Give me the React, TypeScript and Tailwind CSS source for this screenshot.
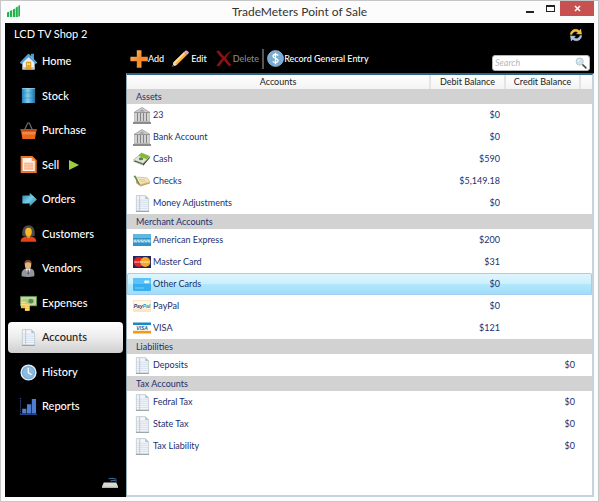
import type { ReactNode } from 'react'
import clsx from 'clsx'

type IconProps = { className?: string }

function LogoIcon() {
  return (
    <svg className="h-3 w-3.5" viewBox="0 0 14 12" aria-hidden="true">
      <path d="M0 7.500l2.200-1v5.500H0zM3 6l2.200-1v7H3zM6 4.500l2.200-1V12H6zM8.800 2.500l2-1V12h-2zM11.300 1L13 0v11.500h-1.700z" fill="#22b24c" />
    </svg>
  )
}

function RefreshIcon() {
  return (
    <svg className="h-3.5 w-3.5" viewBox="0 0 14 14" aria-hidden="true">
      <path d="M1.200 6.500C1.500 3.200 3.900 1.200 6.600 1.200c1.500 0 2.700.5 3.600 1.400L11.800 1l.9 5.200-5.200-.4 1.400-1.500C7.200 2.900 4 3.300 3 6.600z" fill="#f5bd3c" stroke="#fbdc78" strokeWidth=".3" />
      <path d="M12.800 7.500c-.3 3.300-2.700 5.300-5.400 5.300-1.500 0-2.700-.5-3.600-1.400L2.200 13l-.9-5.200 5.200.4-1.400 1.500c1.700 1.400 4.900 1 5.900-2.300z" fill="#a9c0dc" stroke="#dce8f5" strokeWidth=".3" />
    </svg>
  )
}

function HomeIcon({ className }: IconProps) {
  return (
    <svg className={className} viewBox="0 0 18 18" aria-hidden="true">
      <path d="M11.500.8h3.300v6h-3.300z" fill="#4c96d2" />
      <path d="M2.500 9L9 3l6.500 6v8.500h-13z" fill="#edf0f3" />
      <path d="M2.500 15h13v2.500h-13z" fill="#bcc4ca" />
      <path d="M0 10.300L9 1l9 9.300-1.900.9L9 4.600l-7.100 6.600z" fill="#4b9cdb" stroke="#a5d7f7" strokeWidth=".6" />
      <path d="M6.700 9.500h4.800v7.700H6.700z" fill="#f1a91c" stroke="#c77c14" strokeWidth=".5" />
      <path d="M7.700 10.800h1.200v2H7.700zM9.400 10.800h1.200v2H9.400z" fill="#fff0a0" />
    </svg>
  )
}

function StockIcon({ className }: IconProps) {
  return (
    <svg className={className} viewBox="0 0 18 18" aria-hidden="true">
      <defs>
        <linearGradient id="barrel">
          <stop offset="0" stopColor="#2482b8" />
          <stop offset=".45" stopColor="#7fd0f2" />
          <stop offset="1" stopColor="#1c6ca2" />
        </linearGradient>
      </defs>
      <path d="M2 1.200h14v15.800H2z" fill="url(#barrel)" />
      <path d="M2 6.200h14M2 11.700h14" fill="none" stroke="#2b7ba6" strokeWidth=".7" opacity=".6" />
      <path d="M2 1.600h14" fill="none" stroke="#b8ebff" strokeWidth=".6" />
    </svg>
  )
}

function PurchaseIcon({ className }: IconProps) {
  return (
    <svg className={className} viewBox="0 0 18 18" aria-hidden="true">
      <path d="M4.500 9l3.700-8h1.600l3.700 8" fill="none" stroke="#77716c" strokeWidth="1.200" />
      <path d="M1 8.300h16.500L15.800 18H2.500z" fill="#e9661d" />
      <path d="M.3 7.500h17.600l-.5 2.200H.8z" fill="#b94c16" />
      <path d="M2 10.500h14.300l-.5 2.800H2.400z" fill="#f58645" />
    </svg>
  )
}

function SellIcon({ className }: IconProps) {
  return (
    <svg className={className} viewBox="0 0 18 18" aria-hidden="true">
      <path d="M1.700 1h11l4 3.800v12.200h-15z" fill="#fff2e8" stroke="#f27324" strokeWidth="2" />
      <path d="M12.300 1.400v4h4z" fill="#f79a5c" />
      <path d="M4.500 7h9.500v7.500H4.500z" fill="#f9b68b" />
      <path d="M4.500 9.300H14M4.500 12H14M7.500 7v7.500M10.700 7v7.500" stroke="#fbdac4" strokeWidth=".6" />
    </svg>
  )
}

function OrdersIcon({ className }: IconProps) {
  return (
    <svg className={className} viewBox="0 0 18 18" aria-hidden="true">
      <defs>
        <linearGradient id="arrow" x2="1" y2="1">
          <stop offset="0" stopColor="#1f7da6" />
          <stop offset=".5" stopColor="#78cfe8" />
          <stop offset="1" stopColor="#1c7197" />
        </linearGradient>
      </defs>
      <path d="M2.500 4.800h7.800V1.800L18 9l-7.700 7.200v-3H2.500z" fill="url(#arrow)" />
    </svg>
  )
}

function CustomersIcon({ className }: IconProps) {
  return (
    <svg className={className} viewBox="0 0 18 18" aria-hidden="true">
      <path d="M2.500 11.500C1.500 4.500 4.500.3 9 .3s7.500 4.200 6.500 11.200l-3 1h-7z" fill="#4d4a48" />
      <path d="M7 9.500h4v5H7z" fill="#e09a20" />
      <ellipse cx="9" cy="7.300" rx="3.500" ry="4.400" fill="#fbb929" />
      <path d="M.8 17.700c0-3.700 2.200-4.900 5.500-5.200q2.700 2.600 5.400 0c3.300.3 5.500 1.500 5.500 5.200z" fill="#e8421b" />
    </svg>
  )
}

function VendorsIcon({ className }: IconProps) {
  return (
    <svg className={className} viewBox="0 0 18 18" aria-hidden="true">
      <path d="M1.800 17.300C1 12 3.300 9.500 6.800 9h4c3.600.5 5.100 3 4.200 8.300q-6.500 1.400-13.200 0z" fill="#93979b" />
      <path d="M5.800 9h5.400l-2.400 6z" fill="#fff" />
      <path d="M8 10h1.200l.5 4.500-1 1.200-1-1.200z" fill="#59626b" />
      <ellipse cx="8.500" cy="5" rx="3.400" ry="4.600" fill="#e5b484" />
      <path d="M4.800 5C4.100 1.300 6.100 0 8.700 0s4.300 1.500 3.500 5.200c-.5-2-1.500-2.700-3.400-2.800S5.600 3 4.800 5z" fill="#7a4c28" />
    </svg>
  )
}

function ExpensesIcon({ className }: IconProps) {
  return (
    <svg className={className} viewBox="0 0 18 18" aria-hidden="true">
      <path d="M.4 1.500h17.200v10H.4z" fill="#a9cc8b" stroke="#6a9657" strokeWidth=".7" />
      <path d="M2 3.200h14v6.500H2z" fill="none" stroke="#dceccb" strokeWidth=".8" />
      <ellipse cx="11.500" cy="6.500" rx="2.600" ry="2.600" fill="#5b8a4c" />
      <path d="M1 6h5v8H1zM5.200 8.500h5v8.500h-5z" fill="#f0c24a" />
      <path d="M1 8h5M1 10.200h5M5.200 10.700h5M5.200 12.900h5M5.200 15.100h5" stroke="#fff0ad" strokeWidth=".8" />
    </svg>
  )
}

function NoteIcon({ className }: IconProps) {
  return (
    <svg className={className} viewBox="0 0 18 18" aria-hidden="true">
      <path d="M2.500.6H12l3.500 3.600v13h-13z" fill="#f1f5fb" stroke="#b4c4c6" strokeWidth=".8" />
      <path d="M3.500 5.500H15M3.500 7.700H15M3.500 9.900H15M3.500 12.100H15M3.500 14.300H15" stroke="#cddaec" strokeWidth=".8" />
      <path d="M6 1v15.800" stroke="#eab0b0" strokeWidth=".9" />
      <path d="M12 .6l3.500 3.600H12z" fill="#a9c4c0" />
      <path d="M2.100 17.300h13.700" stroke="#87989b" />
    </svg>
  )
}

function HistoryIcon({ className }: IconProps) {
  return (
    <svg className={className} viewBox="0 0 18 18" aria-hidden="true">
      <circle cx="9" cy="9" r="7.800" fill="#6ba6d4" stroke="#e3e9ee" strokeWidth="1.600" />
      <circle cx="9" cy="9" r="6" fill="#88bce3" />
      <path d="M8.800 4v5.200l3.400 2.300" fill="none" stroke="#fff" strokeWidth="1.300" />
    </svg>
  )
}

function ReportsIcon({ className }: IconProps) {
  return (
    <svg className={className} viewBox="0 0 18 18" aria-hidden="true">
      <path d="M.6 0v17" stroke="#3f62ae" strokeDasharray="1 1" />
      <path d="M0 17.300h18" stroke="#2a4a8c" strokeWidth="1.200" />
      <path d="M2.300 11.500h4.500v4.800H2.300zM7.400 6.500h4.500v9.800H7.400zM12.500 1h4.500v15.300h-4.500z" fill="#4f7bd0" />
    </svg>
  )
}

function PlusIcon({ className }: IconProps) {
  return (
    <svg className={className} viewBox="0 0 18 18" aria-hidden="true">
      <defs>
        <linearGradient id="plus" x2="1" y2="1">
          <stop offset="0" stopColor="#ffc27a" />
          <stop offset=".5" stopColor="#f5862a" />
          <stop offset="1" stopColor="#f9a23c" />
        </linearGradient>
      </defs>
      <path d="M6.800.3h4.700v6.400h6.300v4.600h-6.300v6.500H6.800v-6.500H.4V6.700h6.400z" fill="url(#plus)" />
    </svg>
  )
}

function PencilIcon({ className }: IconProps) {
  return (
    <svg className={className} viewBox="0 0 18 18" aria-hidden="true">
      <path d="M.5 17.500l1.200-4.500L12.800 2l3.200 3L5 16z" fill="#f7b23f" />
      <path d="M1.700 13L12.800 2l1.300 1.200L3.200 14.500z" fill="#ffe09a" />
      <path d="M12.800 2L14 .8q1.500-.7 2.900.6t.5 2.300L16 5z" fill="#d9a6d5" />
      <path d="M.5 17.500L1.700 13 5 16z" fill="#f3dec0" />
      <path d="M.5 17.500l.6-2 1.500 1.400z" fill="#333" />
    </svg>
  )
}

function CrossIcon({ className }: IconProps) {
  return (
    <svg className={className} viewBox="0 0 18 18" aria-hidden="true">
      <path d="M.8 1.500l3-.9q2.700 4 5.400 6.200Q12.800 2.300 17.500.5 13.200 4.500 11 8.500q2.500 3.800 6 7.500l-2.500 1.500Q11.200 13.700 8.900 10.900 6 14.700 3.700 17.600L1 16.500Q4 12.500 7 8.800 3.500 5.500.8 1.500z" fill="#8a1210" />
    </svg>
  )
}

function DollarIcon({ className }: IconProps) {
  return (
    <svg className={className} viewBox="0 0 18 18" aria-hidden="true">
      <circle cx="9" cy="9" r="8.400" fill="#78acd2" stroke="#a3c8e2" strokeWidth=".8" />
      <path d="M12 5.800C9.500 3.900 6.200 4.700 6.300 6.700c.1 2.300 5.500 1.900 5.500 4.400 0 2.200-3.500 2.800-5.800 1M9 3v12" fill="none" stroke="#fff" strokeWidth="1.400" />
    </svg>
  )
}

function SearchIcon() {
  return (
    <svg className="h-3 w-3 shrink-0" viewBox="0 0 12 12" aria-hidden="true">
      <path d="M7.500 7.500l3.400 3.300" stroke="#4a4a4a" strokeWidth="1.700" strokeLinecap="round" />
      <circle cx="4.700" cy="4.500" r="3.600" fill="#cbe4f4" stroke="#b8c6d0" strokeWidth="1" />
      <path d="M2.800 4.500q.3-1.600 1.900-1.700" stroke="#fff" fill="none" />
    </svg>
  )
}

function RegisterIcon() {
  return (
    <svg className="h-3 w-4" viewBox="0 0 16 12" aria-hidden="true">
      <path d="M1.800 5.500h12.500L16 9.500V11H0V9.500z" fill="#d9dad2" />
      <path d="M0 9.700h16V11H0z" fill="#b4b5ae" />
      <path d="M6.500 1.800l4-.6 4 1M8.500 3.900l3.500-.7 3 1" fill="none" stroke="#3c658b" strokeWidth="1.100" />
    </svg>
  )
}

function BankIcon() {
  return (
    <svg className="h-[17px] w-[18px]" viewBox="0 0 18 17" aria-hidden="true">
      <path d="M1 5.500L9 .5l8 5z" fill="#cfcfcf" stroke="#8f8f8f" strokeWidth=".7" />
      <path d="M6 4.500l3-2 3 2z" fill="#9b9b9b" />
      <path d="M1.500 5.500h15v9h-15z" fill="#858585" />
      <path d="M2 6h2v8H2zM5 6h2v8H5zM8 6h2v8H8zM11 6h2v8h-2zM14 6h2v8h-2z" fill="#d2d2d2" />
      <path d="M1 14h16v1.200H1z" fill="#b7b7b7" />
      <path d="M0 15h18v2H0z" fill="#8c8c8c" />
    </svg>
  )
}

function CashIcon() {
  return (
    <svg className="h-3.5 w-[18px]" viewBox="0 0 18 14" aria-hidden="true">
      <path d="M.5 9.500L8.500 2l8.700 3.500L10.500 13.500z" fill="#38432f" />
      <path d="M.5 8l8-7L17 4.500l-6.800 7z" fill="#e1e8d9" stroke="#8b977d" strokeWidth=".6" />
      <path d="M5.500 3.700L8.500 1l8 3.300-2.800 2.900z" fill="#84b932" />
      <ellipse cx="8" cy="6.800" rx="2.300" ry="1.500" fill="#65804f" />
      <path d="M1 9.800l9 2.900" stroke="#f0f2ed" strokeWidth=".6" />
    </svg>
  )
}

function ChecksIcon() {
  return (
    <svg className="h-3.5 w-[18px]" viewBox="0 0 18 14" aria-hidden="true">
      <path d="M3 6l12.500-.5 1.500 4L7.500 12.500 3 9z" fill="#c9a869" />
      <path d="M2.200 3l12 .8L17 8 6.800 10.800z" fill="#f3e5ba" stroke="#cdb27a" strokeWidth=".6" />
      <path d="M6 5.500l6 .3M7.300 7.500l6-.3" stroke="#cdbb8c" strokeWidth=".6" />
      <path d="M.5 2l1.800-.5L6.800 10l-.5 1z" fill="#5a8b50" />
    </svg>
  )
}

const cardText = {
  fontFamily: 'Liberation Sans',
  fontWeight: 700,
  textAnchor: 'middle' as const,
}

function AmexIcon() {
  return (
    <svg className="h-3 w-[18px]" viewBox="0 0 18 12" aria-hidden="true">
      <path d="M0 0h18v12H0z" fill="#3094c8" />
      <path d="M0 0h18v4H0z" fill="#60b8e0" />
      <path d="M0 5.500h18v3H0z" fill="#6db8dd" />
      <path d="M1 6.200h2M4 6.200h2M7 6.200h2.500M10.500 6.200h2M13.500 6.200H17M1 7.800h3M5 7.800h2M8 7.800h3M12 7.800h2M15 7.800h2" stroke="#fff" strokeWidth=".7" />
    </svg>
  )
}

function MasterCardIcon() {
  return (
    <svg className="h-3 w-[18px]" viewBox="0 0 18 12" aria-hidden="true">
      <path d="M0 0h18v12H0z" fill="#21275e" />
      <circle cx="5.700" cy="6" r="5" fill="#e02420" />
      <circle cx="12.300" cy="6" r="5" fill="#f6a723" />
      <path d="M1.500 6h15" stroke="#fff" strokeWidth="1.600" strokeDasharray="1.300 .5" opacity=".7" />
    </svg>
  )
}

function OtherCardIcon() {
  return (
    <svg className="h-[13px] w-[18px]" viewBox="0 0 18 13" aria-hidden="true">
      <rect width="18" height="13" rx="1.200" fill="#38aef0" />
      <path d="M1 0h16l1 1v5H0V1z" fill="#5cc3f8" />
      <circle cx="12.700" cy="3.800" r="1.500" fill="#fff" />
      <circle cx="15" cy="3.800" r="1.500" fill="#d8f2ff" />
      <path d="M2 10h9" stroke="#8fdcff" strokeWidth=".7" />
    </svg>
  )
}

function PayPalIcon() {
  return (
    <svg className="h-3 w-[18px]" viewBox="0 0 18 12" aria-hidden="true">
      <path d="M.4.4h17.200v11.200H.4z" fill="#fff7e9" stroke="#f9dcb3" strokeWidth=".8" />
      <path d="M1 8.500h16V11H1z" fill="#fde5c4" />
      <text x="9" y="7.500" fontSize="5" fontStyle="italic" fill="#1b3d78" {...cardText}>
        Pay<tspan fill="#2790c4">Pal</tspan>
      </text>
    </svg>
  )
}

function VisaIcon() {
  return (
    <svg className="h-3 w-[18px]" viewBox="0 0 18 12" aria-hidden="true">
      <path d="M0 0h18v12H0z" fill="#fff" />
      <path d="M0 .5h18V3H0z" fill="#168ac3" />
      <path d="M0 8.800h18v2.700H0z" fill="#f49b14" />
      <text x="9" y="8" fontSize="5" fontStyle="italic" fill="#155f98" {...cardText}>
        VISA
      </text>
    </svg>
  )
}

const navItems = [
  { label: 'Home', icon: HomeIcon },
  { label: 'Stock', icon: StockIcon },
  { label: 'Purchase', icon: PurchaseIcon },
  { label: 'Sell', icon: SellIcon, arrow: true },
  { label: 'Orders', icon: OrdersIcon },
  { label: 'Customers', icon: CustomersIcon },
  { label: 'Vendors', icon: VendorsIcon },
  { label: 'Expenses', icon: ExpensesIcon },
  { label: 'Accounts', icon: NoteIcon, active: true },
  { label: 'History', icon: HistoryIcon },
  { label: 'Reports', icon: ReportsIcon },
]

type Account = {
  name: string
  icon: ReactNode
  debit?: string
  credit?: string
  selected?: boolean
}

const note = <NoteIcon className="h-[17px] w-[17px]" />

const groups: { title: string; accounts: Account[] }[] = [
  {
    title: 'Assets',
    accounts: [
      { name: '23', icon: <BankIcon />, debit: '$0' },
      { name: 'Bank Account', icon: <BankIcon />, debit: '$0' },
      { name: 'Cash', icon: <CashIcon />, debit: '$590' },
      { name: 'Checks', icon: <ChecksIcon />, debit: '$5,149.18' },
      { name: 'Money Adjustments', icon: note, debit: '$0' },
    ],
  },
  {
    title: 'Merchant Accounts',
    accounts: [
      { name: 'American Express', icon: <AmexIcon />, debit: '$200' },
      { name: 'Master Card', icon: <MasterCardIcon />, debit: '$31' },
      { name: 'Other Cards', icon: <OtherCardIcon />, debit: '$0', selected: true },
      { name: 'PayPal', icon: <PayPalIcon />, debit: '$0' },
      { name: 'VISA', icon: <VisaIcon />, debit: '$121' },
    ],
  },
  {
    title: 'Liabilities',
    accounts: [{ name: 'Deposits', icon: note, credit: '$0' }],
  },
  {
    title: 'Tax Accounts',
    accounts: [
      { name: 'Fedral Tax', icon: note, credit: '$0' },
      { name: 'State Tax', icon: note, credit: '$0' },
      { name: 'Tax Liability', icon: note, credit: '$0' },
    ],
  },
]

function TitleBar() {
  return (
    <header className="grid h-[22px] grid-cols-[1fr_auto_1fr] items-start">
      <div className="pt-1 pl-0.5">
        <LogoIcon />
      </div>
      <h1 className="pt-0.5 text-xs leading-[18px] text-[#333]">TradeMeters Point of Sale</h1>
      <div className="flex justify-end">
        <button aria-label="Minimize" className="flex h-[15px] w-5 items-end justify-center pb-[3px]">
          <span className="h-0.5 w-2 bg-[#222]" />
        </button>
        <button aria-label="Maximize" className="flex h-[15px] w-5 items-center justify-center">
          <span className="h-[7px] w-[9px] border border-t-2 border-[#222]" />
        </button>
        <button aria-label="Close" className="flex h-[15px] w-[34px] items-center justify-center bg-[#c75050]">
          <svg className="h-[7px] w-[7px]" viewBox="0 0 7 7" aria-hidden="true">
            <path d="M1 1l5 5M6 1L1 6" stroke="#fff" strokeWidth="1.500" />
          </svg>
        </button>
      </div>
    </header>
  )
}

function Sidebar() {
  return (
    <aside className="flex w-[121px] shrink-0 flex-col">
      <nav className="grid h-[380px] auto-rows-fr px-[3px]">
        {navItems.map(({ label, icon: Icon, arrow, active }) => (
          <button
            key={label}
            className={clsx(
              'my-0.5 flex items-center rounded-[4px] pl-3 text-[11px] font-medium',
              active ? 'bg-linear-to-b from-white via-[#ececec] to-[#cfcfcf] text-[#222]' : 'text-white',
            )}
          >
            <Icon className="mr-[5px] h-[17px] w-[17px]" />
            {label}
            {arrow && (
              <svg className="ml-2.5 h-2.5 w-2.5" viewBox="0 0 10 10" aria-hidden="true">
                <path d="M0 0l10 5-10 5z" fill="#9bcf3b" />
              </svg>
            )}
          </button>
        ))}
      </nav>
      <button aria-label="Cash register" className="mt-auto mr-2 mb-2 self-end">
        <RegisterIcon />
      </button>
    </aside>
  )
}

function Toolbar() {
  return (
    <div className="flex h-[29px] items-center px-1 text-[9px] font-medium text-white">
      <button className="flex items-center">
        <PlusIcon className="h-[18px] w-[18px]" />
        Add
      </button>
      <button className="ml-2 flex items-center">
        <PencilIcon className="mr-0.5 h-[17px] w-[17px]" />
        Edit
      </button>
      <button disabled className="ml-2 flex items-center text-[#8a8a8a]">
        <CrossIcon className="h-[17px] w-[18px]" />
        Delete
      </button>
      <span className="mx-[3px] h-5 w-0.5 bg-[#555]" />
      <button className="flex items-center">
        <DollarIcon className="h-[17px] w-[17px]" />
        Record General Entry
      </button>
      <label className="mt-2 ml-auto flex h-4 w-[98px] items-center rounded-[3px] border border-[#b5b5b5] bg-white px-0.5">
        <input
          type="search"
          aria-label="Search"
          placeholder="Search"
          className="min-w-0 flex-1 text-[9px] font-normal text-[#222] italic outline-none placeholder:text-[#b8b8b8]"
        />
        <SearchIcon />
      </label>
    </div>
  )
}

function AccountsTable() {
  return (
    <div className="flex-1 border-t-2 border-r-2 border-b-2 border-l border-[#c5d3dd] border-t-[#2c6487] border-l-[#8fa9b5] bg-white">
      <table className="w-full table-fixed text-[9px] text-[#1c2f6c]">
        <colgroup>
          <col />
          <col className="w-[75px]" />
          <col className="w-[75px]" />
          <col className="w-3" />
        </colgroup>
        <thead>
          <tr className="h-3.5 bg-linear-to-b from-white to-[#f3f3f3] leading-[14px] text-[#222]">
            <th className="border-r-2 border-[#e4e4e4] p-0 font-normal">Accounts</th>
            <th className="border-r-2 border-[#e4e4e4] p-0 font-normal">Debit Balance</th>
            <th className="border-r-2 border-[#e4e4e4] p-0 font-normal">Credit Balance</th>
            <td className="p-0" />
          </tr>
        </thead>
        {groups.map((group) => (
          <tbody key={group.title}>
            <tr className="h-[15px] bg-[#d2d2d2] leading-[15px]">
              <th colSpan={4} className="p-0 pl-[9px] text-left font-normal">
                {group.title}
              </th>
            </tr>
            {group.accounts.map((account) => (
              <tr
                key={account.name}
                className={clsx(
                  'h-[22px] leading-[18px]',
                  account.selected &&
                    'rounded-[2px] bg-[linear-gradient(#e2f6fe,#c9effd_50%,#b4e7fc_50%,#9cdcf9)] outline outline-offset-[-1px] outline-[#a6cdf0]',
                )}
              >
                <td className="p-0 pl-1.5">
                  <div className="flex items-center">
                    <span className="mr-0.5 flex w-[18px] justify-center">{account.icon}</span>
                    {account.name}
                  </div>
                </td>
                <td className="p-0 pr-[5px] text-right">{account.debit}</td>
                <td className="p-0 pr-[5px] text-right">{account.credit}</td>
                <td className="p-0" />
              </tr>
            ))}
          </tbody>
        ))}
      </table>
    </div>
  )
}

export default function App() {
  return (
    <div className="flex min-h-screen flex-col border border-[#c6c6c6] bg-[#fcfcfc] px-1 pb-1 font-['Lato',sans-serif]">
      <TitleBar />
      <div className="flex flex-1 flex-col bg-black">
        <div className="flex h-[21px] items-center justify-between pt-0.5 pr-[11px] pl-[9px] text-[11px] text-white">
          <h2>LCD TV Shop 2</h2>
          <button aria-label="Refresh">
            <RefreshIcon />
          </button>
        </div>
        <div className="flex flex-1">
          <Sidebar />
          <main className="flex min-w-0 flex-1 flex-col">
            <Toolbar />
            <AccountsTable />
          </main>
        </div>
      </div>
    </div>
  )
}
